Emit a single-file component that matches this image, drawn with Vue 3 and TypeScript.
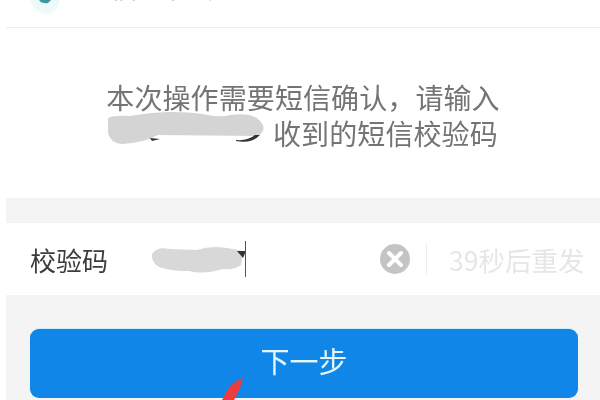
<script setup lang="ts">
const title = '短信手机号'
const lineOne = '本次操作需要短信确认，请输入'
const lineTwo = '收到的短信校验码'
</script>

<template>
  <div class="page">
    <header class="head">
      <svg class="logo" width="34" height="16" viewBox="0 0 34 16">
        <path d="M2 0 Q8 15 22 14 Q30 10 32 0 Z" fill="#eef9fa" />
        <path d="M11 0 Q14 4 20 3 L23 0 Z" fill="#3f97a6" />
      </svg>
      <span class="title">{{ title }}</span>
    </header>

    <section class="notice">
      <p class="line">{{ lineOne }}</p>
      <p class="line line-two">
        <svg class="mask" width="165" height="36" viewBox="0 0 165 36">
          <path d="M0 3 Q6 0 22 1 Q60 -6 95 -1 Q112 3 122 0 Q145 -3 152 6 Q160 14 150 21 L50 20 Q35 28 14 29 Q2 28 0 18 Z" fill="#d4d4d4" />
          <path d="M42 23 L52 24 L44 26 Z M128 25 Q140 26 147 20 L152 20 Q144 29 128 26 Z" fill="#333" />
        </svg>
        <span>{{ lineTwo }}</span>
      </p>
    </section>

    <div class="band"></div>

    <div class="field">
      <span class="label">校验码</span>
      <div class="value">
        <svg width="95" height="32" viewBox="0 0 95 32">
          <path d="M1 11 Q6 3 18 6 L46 7 Q60 2 76 5 L92 8 L90 22 Q84 27 72 26 Q52 32 38 28 Q14 28 5 22 Q0 16 1 11 Z" fill="#d8d8d8" />
          <path d="M86 8 L95 8 L92 15 Z" fill="#333" />
        </svg>
        <i class="caret"></i>
      </div>
      <span class="clear">
        <svg width="32" height="32" viewBox="0 0 32 32">
          <circle cx="16" cy="16" r="15" fill="#c4c4c4" />
          <path d="M10 10 L22 22 M22 10 L10 22" stroke="#fff" stroke-width="4" stroke-linecap="round" />
        </svg>
      </span>
      <i class="sep"></i>
      <span class="resend">39秒后重发</span>
    </div>

    <div class="action">
      <button class="next" type="button">下一步</button>
    </div>

    <svg class="arrow" width="30" height="24" viewBox="0 0 30 24">
      <path d="M25 0 L22 10 L15 24 L3 24 L9 13 Q14 4 25 0 Z" fill="#ee3b3b" />
    </svg>
  </div>
</template>

<style>
html, body { margin: 0; background: #fff; }
</style>

<style scoped>
.page {
  position: relative;
  width: 600px;
  height: 400px;
  overflow: hidden;
  box-sizing: border-box;
  padding-left: 6px;
  background: #fff;
  font-family: "Noto Sans CJK SC", "Noto Sans", sans-serif;
  filter: blur(0.5px);
}
.head {
  height: 27px;
  border-bottom: 1px solid #ececec;
  display: flex;
  align-items: flex-start;
  overflow: hidden;
}
.logo { margin-left: 22px; flex: none; }
.title {
  margin-left: 20px;
  margin-top: -35px;
  font-size: 28px;
  line-height: 42px;
  color: #333;
  white-space: nowrap;
}
.notice {
  height: 170px;
  box-sizing: border-box;
  padding-top: 51px;
  color: #747474;
  font-size: 28px;
  text-align: center;
}
.line { margin: 0; height: 36px; line-height: 36px; white-space: nowrap; letter-spacing: 0.1px; }
.line-two {
  display: flex;
  justify-content: flex-start;
  align-items: center;
  padding-left: 102px;
}
.mask { flex: none; overflow: visible; }
.band { height: 25px; background: #f4f4f5; }
.field {
  height: 72px;
  display: flex;
  align-items: center;
  padding-left: 24px;
}
.label { font-size: 26px; color: #3c3c3c; width: 121px; }
.value { width: 228px; display: flex; align-items: center; }
.caret { width: 1px; height: 36px; background: #555; margin-left: -1px; }
.clear { display: flex; }
.sep { width: 1px; height: 30px; background: #ececec; margin-left: 15px; }
.resend { margin-left: 22px; font-size: 26.5px; color: #e6e6e6; white-space: nowrap; }
.action {
  height: 105px;
  box-sizing: border-box;
  background: #f4f4f5;
  padding: 34px 22px 0 24px;
}
.next {
  display: block;
  width: 100%;
  height: 69px;
  border: 0;
  border-top: 1px solid #2a7fc0;
  border-radius: 9px;
  background: #0f86e8;
  box-shadow: 0 -1px 0 #c8f0fa;
  color: #e4f6fb;
  font-family: inherit;
  font-size: 29px;
  padding: 0 0 8px;
}
.arrow { position: absolute; left: 218px; top: 378px; }
</style>
